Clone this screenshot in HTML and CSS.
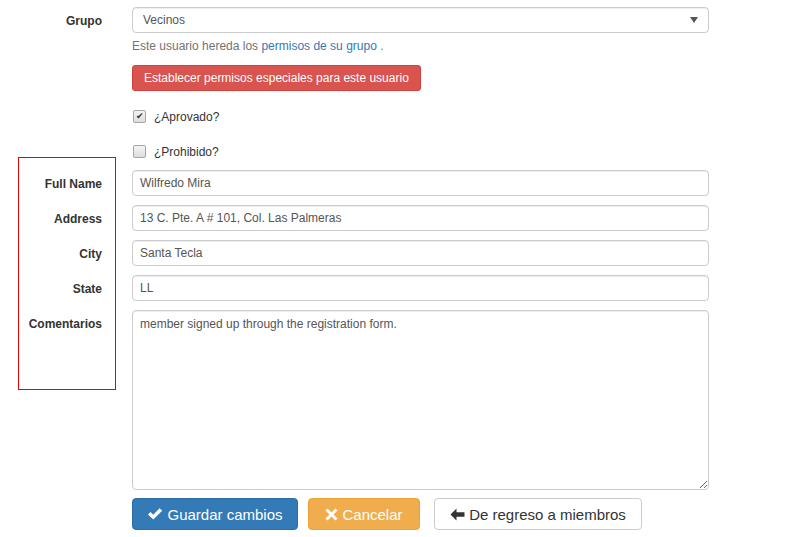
FILE: index.html
```html
<!DOCTYPE html>
<html lang="es">
<head>
  <meta charset="UTF-8">
  <title>Editar miembro</title>
  <link rel="stylesheet" href="styles.css">
</head>
<body>

  <form class="member-form">
    <div class="row">
      <label class="control-label top">Grupo</label>
      <div class="controls">
        <div class="select-wrap">
          <select class="form-control">
            <option>Vecinos</option>
          </select>
        </div>
        <p class="help-block">Este usuario hereda los <a href="#">permisos de su grupo</a> .</p>
        <button type="button" class="btn btn-danger">Establecer permisos especiales para este usuario</button>
      </div>
    </div>

    <div class="row check-row first">
      <div></div>
      <label class="checkbox"><span class="box checked">&#10004;</span>¿Aprovado?</label>
    </div>

    <div class="row check-row">
      <div></div>
      <label class="checkbox"><span class="box"></span>¿Prohibido?</label>
    </div>

    <div class="custom-fields">
      <div class="row">
        <label class="control-label">Full Name</label>
        <input class="form-control" type="text" value="Wilfredo Mira">
      </div>
      <div class="row">
        <label class="control-label">Address</label>
        <input class="form-control" type="text" value="13 C. Pte. A # 101, Col. Las Palmeras">
      </div>
      <div class="row">
        <label class="control-label">City</label>
        <input class="form-control" type="text" value="Santa Tecla">
      </div>
      <div class="row">
        <label class="control-label">State</label>
        <input class="form-control" type="text" value="LL">
      </div>
      <div class="row last">
        <label class="control-label top">Comentarios</label>
        <textarea class="form-control">member signed up through the registration form.</textarea>
      </div>
      <div class="highlight"></div>
    </div>

    <div class="row">
      <div></div>
      <div class="actions">
        <button type="button" class="btn btn-lg btn-primary">
          <svg width="16" height="14" viewBox="0 0 16 14"><path d="M1 7.5 L3.6 5 L6.3 7.7 L12.6 1.2 L15.2 3.8 L6.3 12.6 Z" fill="#fff"/></svg>
          <span>Guardar cambios</span>
        </button>
        <button type="button" class="btn btn-lg btn-warning">
          <svg width="13" height="13" viewBox="0 0 13 13"><path d="M2.5 0.5 L6.5 4.5 L10.5 0.5 L12.5 2.5 L8.5 6.5 L12.5 10.5 L10.5 12.5 L6.5 8.5 L2.5 12.5 L0.5 10.5 L4.5 6.5 L0.5 2.5 Z" fill="#fff"/></svg>
          <span>Cancelar</span>
        </button>
        <button type="button" class="btn btn-lg btn-default">
          <svg width="15" height="13" viewBox="0 0 15 13"><path d="M0.5 6.5 L6.5 0.5 L6.5 4.2 L14.5 4.2 L14.5 8.8 L6.5 8.8 L6.5 12.5 Z" fill="#333"/></svg>
          <span>De regreso a miembros</span>
        </button>
      </div>
    </div>
  </form>

</body>
</html>
```

FILE: styles.css
```css
* {
  box-sizing: border-box;
}

body {
  margin: 0;
  font-family: "Liberation Sans", Arial, sans-serif;
  font-size: 12px;
  color: #333;
  background: #fff;
}

.member-form {
  padding-top: 7px;
  width: 709px;
}

.row {
  display: grid;
  grid-template-columns: 102px 1fr;
  column-gap: 30px;
  margin-bottom: 9px;
}

.row.last {
  margin-bottom: 8px;
}

.control-label {
  font-weight: bold;
  text-align: right;
  align-self: center;
  padding-top: 1px;
}

.control-label.top {
  align-self: start;
  padding-top: 7px;
}

.form-control {
  display: block;
  width: 100%;
  height: 26px;
  padding: 4px 7px;
  font-family: inherit;
  font-size: 12px;
  color: #555;
  background: #fff;
  border: 1px solid #ccc;
  border-radius: 4px;
  box-shadow: inset 0 1px 1px rgba(0, 0, 0, .075);
}

textarea.form-control {
  height: 180px;
  resize: vertical;
  padding-top: 5px;
  line-height: 1.42;
}

.select-wrap {
  position: relative;
}

.select-wrap select {
  appearance: none;
  -webkit-appearance: none;
  padding-left: 10px;
}

.select-wrap::after {
  content: "";
  position: absolute;
  right: 11px;
  top: 10px;
  border-left: 4px solid transparent;
  border-right: 4px solid transparent;
  border-top: 6px solid #555;
}

.help-block {
  margin: 5px 0 10px;
  color: #737373;
  line-height: 17px;
}

.help-block a {
  color: #337ab7;
  text-decoration: none;
}

.btn {
  display: inline-flex;
  align-items: center;
  justify-content: center;
  gap: 4px;
  height: 26px;
  padding: 0 11px;
  font-family: inherit;
  font-size: 12px;
  white-space: nowrap;
  border: 1px solid transparent;
  border-radius: 3px;
  cursor: pointer;
}

.btn-danger {
  color: #fff;
  background: #d9534f;
  border-color: #d43f3a;
}

.check-row {
  height: 26px;
  align-items: center;
}

.check-row.first {
  margin-top: 13px;
}

.checkbox {
  display: flex;
  align-items: center;
  gap: 8px;
  margin-left: 1px;
  margin-top: -1px;
}

.box {
  width: 13px;
  height: 13px;
  border: 1px solid #a6a6a6;
  border-radius: 2px;
  background: linear-gradient(#f4f4f4, #dedede);
  font-size: 9px;
  line-height: 11px;
  text-align: center;
  color: #333;
}

.custom-fields {
  position: relative;
  margin-top: -4px;
}

.highlight {
  position: absolute;
  left: 18px;
  top: -13px;
  width: 98px;
  height: 233px;
  border: 1px solid #e00;
  pointer-events: none;
}

.actions {
  display: flex;
  gap: 10px;
}

.btn-lg {
  height: 32px;
  font-size: 15px;
  padding: 0 8px;
  border-radius: 4px;
}

.btn-primary {
  color: #fff;
  background: #337ab7;
  border-color: #2e6da4;
  width: 166px;
}

.btn-warning {
  color: #fff;
  background: #f0ad4e;
  border-color: #eea236;
  width: 112px;
}

.btn-default {
  color: #333;
  background: #fff;
  border-color: #ccc;
  width: 208px;
  margin-left: 4px;
}
```
